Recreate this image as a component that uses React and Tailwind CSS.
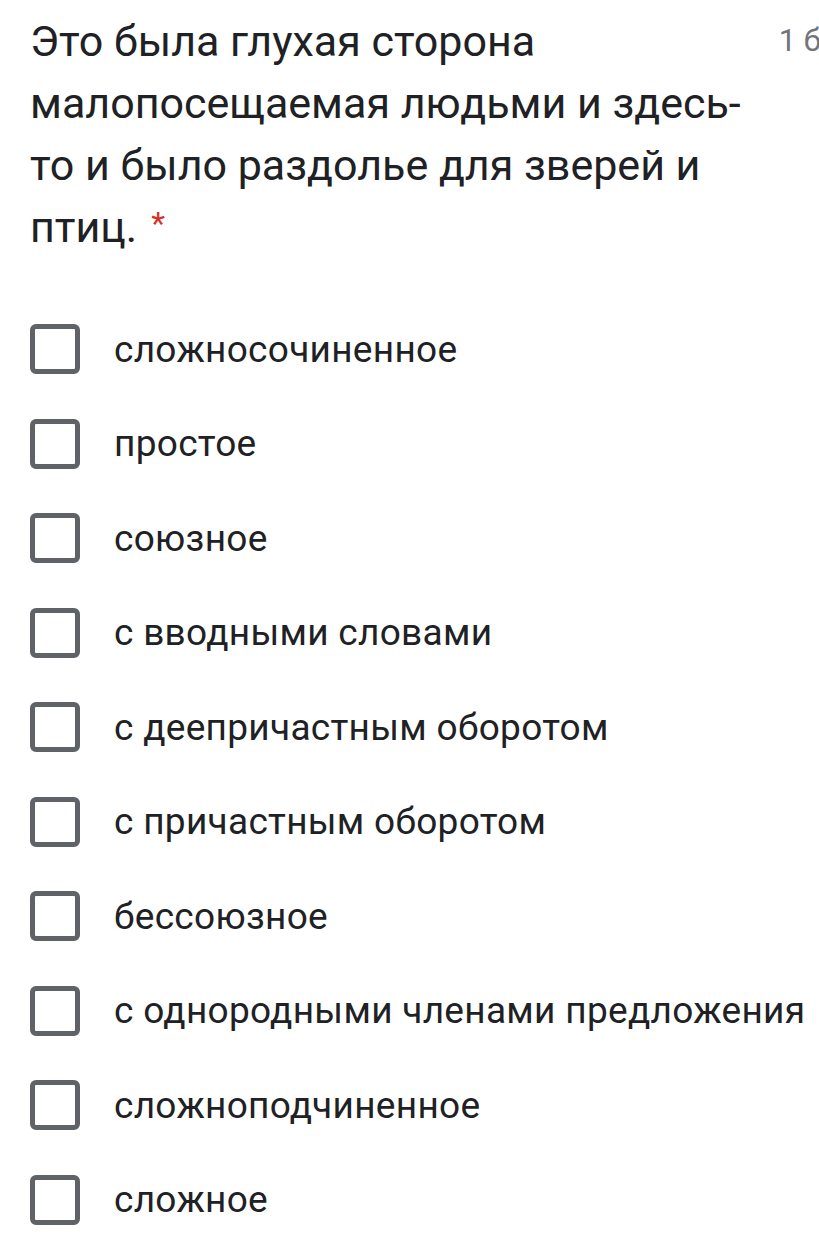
const OPTIONS = [
  'сложносочиненное',
  'простое',
  'союзное',
  'с вводными словами',
  'с деепричастным оборотом',
  'с причастным оборотом',
  'бессоюзное',
  'с однородными членами предложения',
  'сложноподчиненное',
  'сложное',
]

export default function App() {
  return (
    <div className="w-[819px] h-[1252px] bg-white overflow-hidden" style={{ fontFamily: 'Roboto, "Noto Sans", sans-serif' }}>
      {/* Question header */}
      <div className="flex items-start justify-between pl-[30px] pt-[10px]">
        <div className="w-[720px] text-[43px] leading-[62px] text-[#202124]">
          Это была глухая сторона малопосещаемая людьми и здесь-
          <br />
          то и было раздолье для зверей и птиц.
          <span className="text-[#d93025] text-[32px] align-top ml-[14px] relative top-[-4px]">*</span>
        </div>
        <div className="text-[31px] leading-[62px] text-[#70757a] whitespace-nowrap -mr-[2px]">1 б</div>
      </div>

      {/* Options */}
      <div className="flex flex-col pt-[44px] pl-[30px]">
        {OPTIONS.map(o => (
          <div key={o} className="flex items-center h-[94.5px] gap-[34px]">
            <div className="w-[50px] h-[50px] border-[5px] border-[#5f6368] rounded-[6px] shrink-0" />
            <span className="text-[37px] text-[#202124] tracking-[0.3px] whitespace-nowrap">{o}</span>
          </div>
        ))}
      </div>
    </div>
  )
}
